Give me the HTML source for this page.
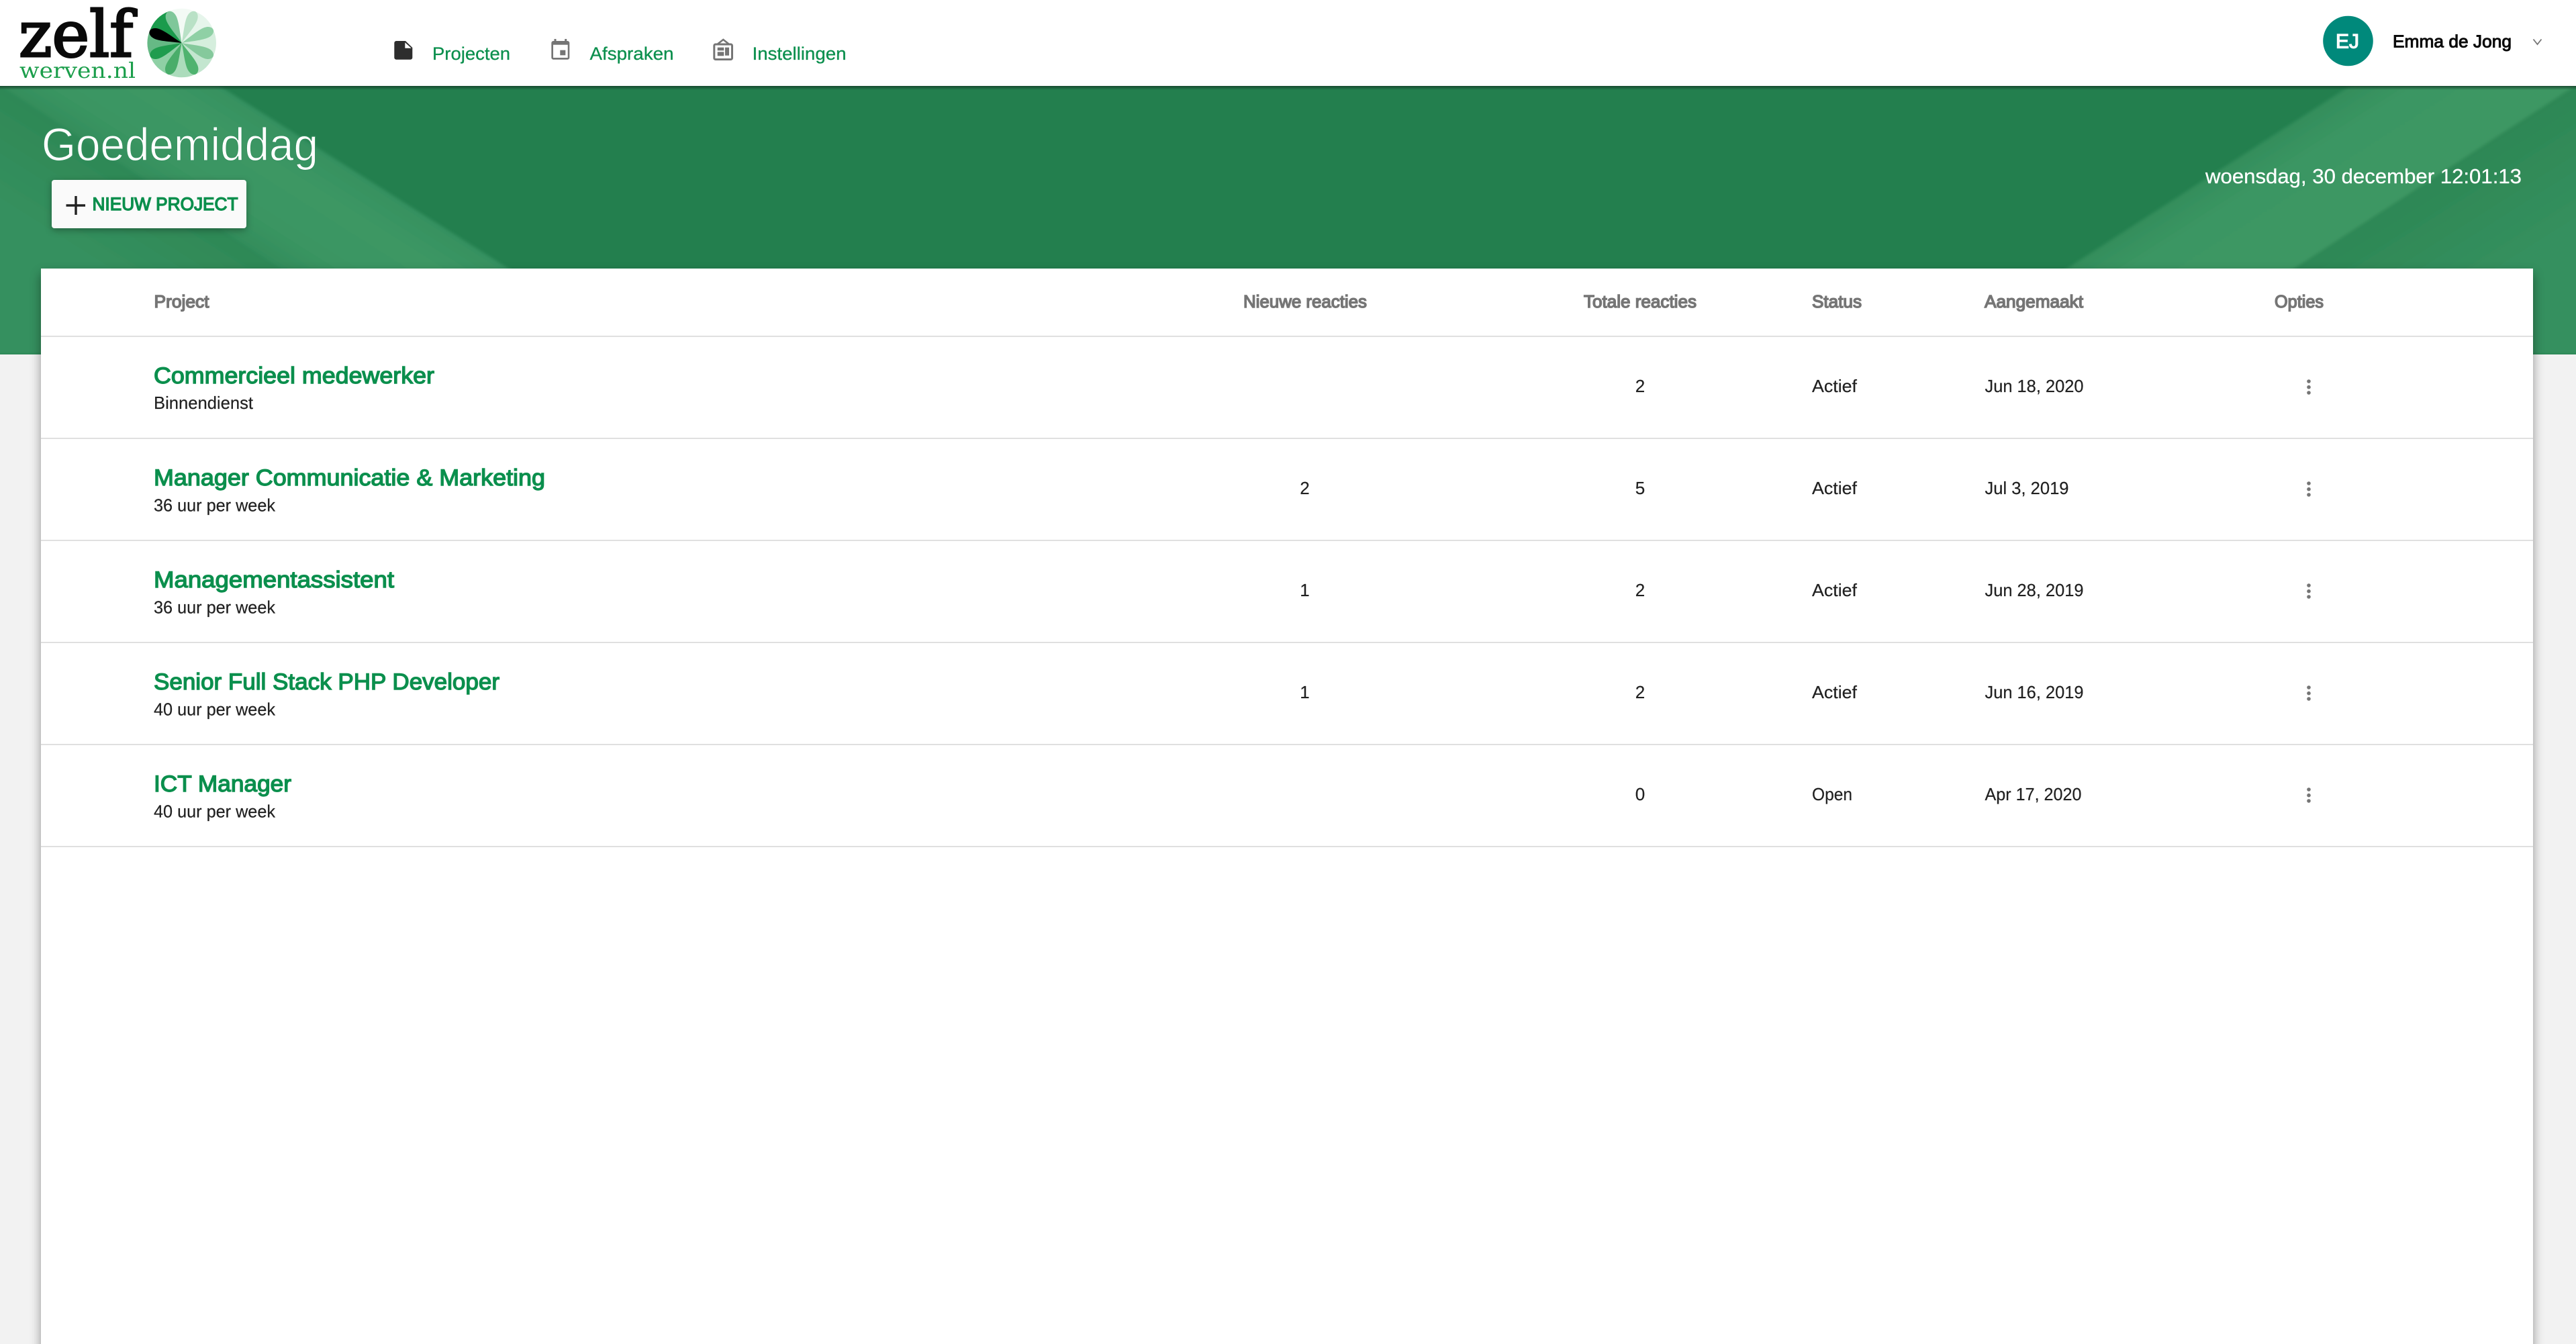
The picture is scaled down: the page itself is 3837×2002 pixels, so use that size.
<!DOCTYPE html>
<html lang="nl"><head><meta charset="utf-8"><title>Zelf werven</title>
<style>
html,body{margin:0;padding:0;width:3837px;height:2002px;overflow:hidden;background:#f2f2f2}
svg{display:block;font-family:"Liberation Sans",Arial,sans-serif}
.nav{font-size:27px;fill:#0b8f4d;stroke:#0b8f4d;stroke-width:.3}
.hd{font-size:26px;fill:#757575;stroke:#757575;stroke-width:1.5}
.t{font-size:34.5px;fill:#0b8f4d;stroke:#0b8f4d;stroke-width:1.4}
.s{font-size:26px;fill:#212121;stroke:#212121;stroke-width:.2}
.n{font-size:26px;fill:#212121;text-anchor:middle;stroke:#212121;stroke-width:.2}
.d{fill:#757575}
</style></head><body>
<svg width="3837" height="2002" viewBox="0 0 3837 2002" xmlns="http://www.w3.org/2000/svg">
<defs>
<clipPath id="ban"><rect x="0" y="128" width="3837" height="400"/></clipPath>
<filter id="b3" x="-5%" y="-5%" width="110%" height="110%"><feGaussianBlur stdDeviation="2.5"/></filter>
<linearGradient id="hs" x1="0" y1="0" x2="0" y2="1"><stop offset="0" stop-color="#143f28" stop-opacity=".85"/><stop offset="1" stop-color="#143f28" stop-opacity="0"/></linearGradient>
<linearGradient id="bl" gradientUnits="userSpaceOnUse" x1="210" y1="264" x2="304" y2="116"><stop offset="0" stop-color="#338d5b"/><stop offset=".25" stop-color="#3a9562"/><stop offset=".7" stop-color="#3c9764"/><stop offset="1" stop-color="#369160"/></linearGradient>
<linearGradient id="br" gradientUnits="userSpaceOnUse" x1="3300" y1="255" x2="3398" y2="409"><stop offset="0" stop-color="#338d5b"/><stop offset=".3" stop-color="#3b9663"/><stop offset="1" stop-color="#3c9764"/></linearGradient>
<linearGradient id="tl" gradientUnits="userSpaceOnUse" x1="210" y1="264" x2="130" y2="390"><stop offset="0" stop-color="#2e8856"/><stop offset="1" stop-color="#35905e"/></linearGradient>
<linearGradient id="tr" gradientUnits="userSpaceOnUse" x1="3635" y1="255" x2="3730" y2="405"><stop offset="0" stop-color="#2d8755"/><stop offset="1" stop-color="#35905e"/></linearGradient>
<path id="lobe" d="M0 0L-19.5 -47.1Q0 -55.5 19.5 -47.1Z"/>
<path id="leaf" d="M0 0C-3 -14 -8.5 -30 -8 -40C-7.5 -48 -3 -51 0 -51C3 -51 7.5 -48 8 -40C8.5 -30 3 -14 0 0Z"/>
</defs>

<rect width="3837" height="2002" fill="#f2f2f2"/>

<!-- banner -->
<rect x="0" y="128" width="3837" height="400" fill="#237f4e"/>
<g clip-path="url(#ban)">
  <g filter="url(#b3)">
    <polygon points="-20,110 2,128 614,528 -20,528" fill="url(#tl)"/>
    <polygon points="-20,100 285,100 327,128 960,528 614,528 2,128" fill="url(#bl)"/>
    <polygon points="3860,110 3835,128 3220,528 3860,528" fill="url(#tr)"/>
    <polygon points="3540,100 3880,100 3835,128 3220,528 2880,528 3500,128" fill="url(#br)"/>
  </g>
</g>
<rect x="0" y="128" width="3837" height="6" fill="url(#hs)"/>

<!-- header -->
<rect x="0" y="0" width="3837" height="128" fill="#fff"/>

<!-- logo -->
<text x="28" y="84" font-family="'DejaVu Serif',serif" font-size="95" fill="#0a0a0a" stroke="#0a0a0a" stroke-width="3" textLength="170" lengthAdjust="spacingAndGlyphs">zelf</text>
<text x="29" y="116" font-family="'DejaVu Serif',serif" font-size="32" fill="#1b9e4b" textLength="173" lengthAdjust="spacingAndGlyphs">werven.nl</text>
<g transform="translate(270.7 64)">
  <use href="#lobe" fill="#f3faf5"/>
  <use href="#lobe" fill="#e6f5eb" transform="rotate(45)"/>
  <use href="#lobe" fill="#d5eedd" transform="rotate(90)"/>
  <use href="#lobe" fill="#c3e6cf" transform="rotate(135)"/>
  <use href="#lobe" fill="#acdcbc" transform="rotate(180)"/>
  <use href="#lobe" fill="#8fd0a5" transform="rotate(225)"/>
  <use href="#lobe" fill="#66b985" transform="rotate(270)"/>
  <use href="#lobe" fill="#1a9b4c" transform="rotate(315)"/>
  <use href="#leaf" fill="#b9e1c6" transform="rotate(23)"/>
  <use href="#leaf" fill="#8fd0a5" transform="rotate(67)"/>
  <use href="#leaf" fill="#85c99c" transform="rotate(113)"/>
  <use href="#leaf" fill="#4fb36f" transform="rotate(156)"/>
  <use href="#leaf" fill="#49ad6a" transform="rotate(204)"/>
  <use href="#leaf" fill="#1f9c4e" transform="rotate(247)"/>
  <use href="#leaf" fill="#000" transform="rotate(290)"/>
  <use href="#leaf" fill="#7fc79a" transform="rotate(337)"/>
</g>

<!-- nav icons -->
<path d="M590.3 61H604L614.3 71V85.7a3 3 0 0 1-3 3H590.3a3 3 0 0 1-3-3V64a3 3 0 0 1 3-3Z" fill="#2d2d2d"/>
<path d="M603.3 63.3L612.7 71.7H603.3Z" fill="#fff"/>

<rect x="821.3" y="61" width="27" height="27.7" rx="3" fill="#757575"/>
<rect x="825.5" y="58" width="3" height="5" fill="#757575"/>
<rect x="841.2" y="58" width="3" height="5" fill="#757575"/>
<rect x="824" y="66.7" width="21.7" height="19.3" fill="#fff"/>
<rect x="834.3" y="74.7" width="8" height="7.6" fill="#757575"/>

<rect x="1063.8" y="66" width="26.7" height="22.5" rx="2" fill="none" stroke="#757575" stroke-width="3"/>
<path d="M1069 65.5L1077.3 59L1085.5 65.5" fill="none" stroke="#757575" stroke-width="2.6"/>
<rect x="1068.7" y="70.7" width="9.6" height="4.6" fill="#757575"/>
<rect x="1068.7" y="77.3" width="9.6" height="6" fill="#757575"/>
<rect x="1080" y="70.7" width="6" height="12" fill="#757575"/>

<text class="nav" x="644" y="89" textLength="116" lengthAdjust="spacingAndGlyphs">Projecten</text>
<text class="nav" x="878.5" y="89" textLength="125" lengthAdjust="spacingAndGlyphs">Afspraken</text>
<text class="nav" x="1120.5" y="89" textLength="140" lengthAdjust="spacingAndGlyphs">Instellingen</text>

<!-- user -->
<circle cx="3497.5" cy="61" r="37.3" fill="#00897b"/>
<text x="3479" y="71.5" font-size="29.5" fill="#fff" stroke="#fff" stroke-width="1.2" textLength="35" lengthAdjust="spacingAndGlyphs">EJ</text>
<text x="3564" y="70.5" font-size="26" fill="#0a0a0a" stroke="#0a0a0a" stroke-width="1" textLength="177" lengthAdjust="spacingAndGlyphs">Emma de Jong</text>
<path d="M3773.5 58.5L3779.5 66L3785.5 58.5" fill="none" stroke="#757575" stroke-width="1.8"/>

<!-- banner content -->
<text x="62" y="239" font-size="69" fill="#fff" stroke="#369160" stroke-width="1.1" textLength="412" lengthAdjust="spacingAndGlyphs">Goedemiddag</text>
<rect x="77" y="268" width="290" height="72" rx="4" fill="#fafafa" style="filter:drop-shadow(0 3px 5px rgba(0,0,0,.3))"/>
<path d="M98.5 306H127M113 292V320" stroke="#212121" stroke-width="3.4" fill="none"/>
<text x="137.5" y="313" font-size="27" fill="#0b8f4d" stroke="#0b8f4d" stroke-width="1.4" textLength="217" lengthAdjust="spacingAndGlyphs">NIEUW PROJECT</text>
<text x="3285" y="273" font-size="31" fill="#fff" stroke="#fff" stroke-width=".3" textLength="471" lengthAdjust="spacingAndGlyphs">woensdag, 30 december 12:01:13</text>

<!-- card -->
<rect x="61" y="400" width="3712" height="1640" fill="#fff" style="filter:drop-shadow(0 8px 8px rgba(0,0,0,.4))"/>

<text class="hd" x="229.5" y="458" textLength="82" lengthAdjust="spacingAndGlyphs">Project</text>
<text class="hd" x="1852" y="458" textLength="184" lengthAdjust="spacingAndGlyphs">Nieuwe reacties</text>
<text class="hd" x="2359" y="458" textLength="168" lengthAdjust="spacingAndGlyphs">Totale reacties</text>
<text class="hd" x="2699" y="458" textLength="74" lengthAdjust="spacingAndGlyphs">Status</text>
<text class="hd" x="2956" y="458" textLength="147" lengthAdjust="spacingAndGlyphs">Aangemaakt</text>
<text class="hd" x="3388" y="458" textLength="73" lengthAdjust="spacingAndGlyphs">Opties</text>

<g fill="#e0e0e0">
<rect x="61" y="500" width="3712" height="2"/>
<rect x="61" y="652" width="3712" height="2"/>
<rect x="61" y="804" width="3712" height="2"/>
<rect x="61" y="956" width="3712" height="2"/>
<rect x="61" y="1108" width="3712" height="2"/>
<rect x="61" y="1260" width="3712" height="2"/>
</g>

<!-- row 1 -->
<text class="t" x="229" y="571" textLength="418" lengthAdjust="spacingAndGlyphs">Commercieel medewerker</text>
<text class="s" x="229" y="609" textLength="148" lengthAdjust="spacingAndGlyphs">Binnendienst</text>
<text class="n" x="2443" y="584">2</text>
<text class="s" x="2699" y="584" textLength="67" lengthAdjust="spacingAndGlyphs">Actief</text>
<text class="s" x="2956.5" y="584" textLength="147" lengthAdjust="spacingAndGlyphs">Jun 18, 2020</text>
<g class="d"><circle cx="3439" cy="568" r="2.8"/><circle cx="3439" cy="576.7" r="2.8"/><circle cx="3439" cy="585" r="2.8"/></g>

<!-- row 2 -->
<text class="t" x="229" y="723" textLength="583" lengthAdjust="spacingAndGlyphs">Manager Communicatie &amp; Marketing</text>
<text class="s" x="229" y="761.5" textLength="181" lengthAdjust="spacingAndGlyphs">36 uur per week</text>
<text class="n" x="1943.5" y="736">2</text>
<text class="n" x="2443" y="736">5</text>
<text class="s" x="2699" y="736" textLength="67" lengthAdjust="spacingAndGlyphs">Actief</text>
<text class="s" x="2956.5" y="736" textLength="125" lengthAdjust="spacingAndGlyphs">Jul 3, 2019</text>
<g class="d"><circle cx="3439" cy="720" r="2.8"/><circle cx="3439" cy="728.7" r="2.8"/><circle cx="3439" cy="737" r="2.8"/></g>

<!-- row 3 -->
<text class="t" x="229" y="875" textLength="358" lengthAdjust="spacingAndGlyphs">Managementassistent</text>
<text class="s" x="229" y="913.5" textLength="181" lengthAdjust="spacingAndGlyphs">36 uur per week</text>
<text class="n" x="1943.5" y="888">1</text>
<text class="n" x="2443" y="888">2</text>
<text class="s" x="2699" y="888" textLength="67" lengthAdjust="spacingAndGlyphs">Actief</text>
<text class="s" x="2956.5" y="888" textLength="147" lengthAdjust="spacingAndGlyphs">Jun 28, 2019</text>
<g class="d"><circle cx="3439" cy="872" r="2.8"/><circle cx="3439" cy="880.7" r="2.8"/><circle cx="3439" cy="889" r="2.8"/></g>

<!-- row 4 -->
<text class="t" x="229" y="1027" textLength="515" lengthAdjust="spacingAndGlyphs">Senior Full Stack PHP Developer</text>
<text class="s" x="229" y="1065.5" textLength="181" lengthAdjust="spacingAndGlyphs">40 uur per week</text>
<text class="n" x="1943.5" y="1040">1</text>
<text class="n" x="2443" y="1040">2</text>
<text class="s" x="2699" y="1040" textLength="67" lengthAdjust="spacingAndGlyphs">Actief</text>
<text class="s" x="2956.5" y="1040" textLength="147" lengthAdjust="spacingAndGlyphs">Jun 16, 2019</text>
<g class="d"><circle cx="3439" cy="1024" r="2.8"/><circle cx="3439" cy="1032.7" r="2.8"/><circle cx="3439" cy="1041" r="2.8"/></g>

<!-- row 5 -->
<text class="t" x="229" y="1179" textLength="205" lengthAdjust="spacingAndGlyphs">ICT Manager</text>
<text class="s" x="229" y="1217.5" textLength="181" lengthAdjust="spacingAndGlyphs">40 uur per week</text>
<text class="n" x="2443" y="1192">0</text>
<text class="s" x="2699" y="1192" textLength="60" lengthAdjust="spacingAndGlyphs">Open</text>
<text class="s" x="2956.5" y="1192" textLength="144" lengthAdjust="spacingAndGlyphs">Apr 17, 2020</text>
<g class="d"><circle cx="3439" cy="1176" r="2.8"/><circle cx="3439" cy="1184.7" r="2.8"/><circle cx="3439" cy="1193" r="2.8"/></g>
</svg>
</body></html>
